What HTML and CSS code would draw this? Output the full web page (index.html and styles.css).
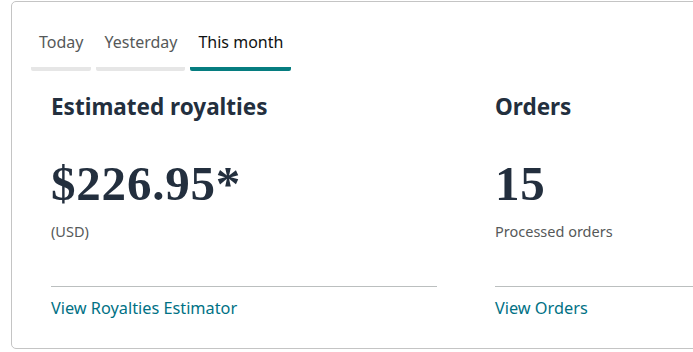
FILE: index.html
```html
<!DOCTYPE html>
<html lang="en">
<head>
    <meta charset="UTF-8">
    <meta name="viewport" content="width=device-width, initial-scale=1.0">
    <title>Sales Dashboard</title>
    <link rel="stylesheet" href="styles.css">
</head>
<body>
    <div class="card">
        <div class="tabs">
            <div class="tab">Today</div>
            <div class="tab">Yesterday</div>
            <div class="tab active">This month</div>
        </div>

        <div class="stats">
            <div class="stat">
                <h2>Estimated royalties</h2>
                <div class="value">$226.95*</div>
                <div class="note">(USD)</div>
                <div class="footer">
                    <a href="#">View Royalties Estimator</a>
                </div>
            </div>

            <div class="stat">
                <h2>Orders</h2>
                <div class="value">15</div>
                <div class="note">Processed orders</div>
                <div class="footer">
                    <a href="#">View Orders</a>
                </div>
            </div>
        </div>
    </div>
</body>
</html>
```

FILE: styles.css
```css
/* General styles */
body {
    margin: 0;
    font-family: "Noto Sans", Arial, sans-serif;
    background-color: #fff;
    color: #0f1111;
    overflow: hidden;
}

.card {
    margin: 1px 0 0 11px;
    width: 760px;
    height: 348px;
    border: 1px solid #c4c4c4;
    border-radius: 5px;
    box-sizing: border-box;
    padding: 0 0 0 19px;
}

.tabs {
    display: flex;
    gap: 5px;
    padding-top: 27px;
}

.tab {
    padding: 0 8px 12px;
    font-size: 16px;
    line-height: 26px;
    color: #565959;
    border-bottom: 4px solid #e6e6e6;
    border-radius: 0 0 2px 2px;
}

.tab.active {
    color: #0f1111;
    border-bottom-color: #067d80;
}

.stats {
    display: grid;
    grid-template-columns: 386px 1fr;
    gap: 58px;
    padding-left: 20px;
}

h2 {
    margin: 21px 0 0;
    font-size: 22.5px;
    line-height: 30px;
    font-weight: 700;
    color: #232f3e;
}

.value {
    margin-top: 37px;
    font-family: "Liberation Serif", "Times New Roman", serif;
    font-weight: 700;
    font-size: 49px;
    line-height: 49px;
    letter-spacing: 0.8px;
    color: #232f3e;
}

.note {
    margin-top: 13px;
    font-size: 14.5px;
    line-height: 20px;
    color: #565959;
}

.footer {
    margin-top: 45px;
    border-top: 1px solid #bbbfbf;
    padding-top: 9px;
}

.footer a {
    font-size: 16.3px;
    line-height: 24px;
    color: #007185;
    text-decoration: none;
}
```
